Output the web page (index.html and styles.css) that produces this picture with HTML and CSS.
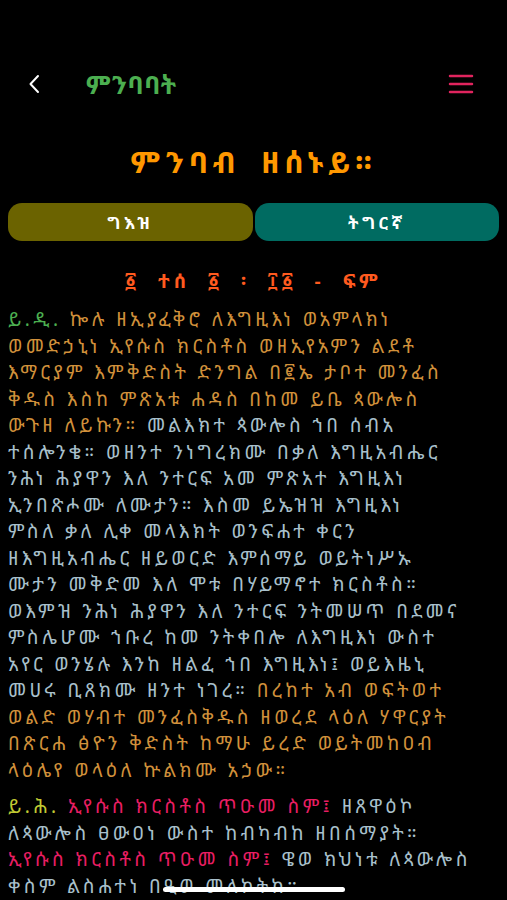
FILE: index.html
```html
<!DOCTYPE html>
<html lang="gez">
<head>
<meta charset="utf-8">
<title>ምንባባት</title>
<link rel="stylesheet" href="styles.css">
</head>
<body>
<div class="screen">
  <header class="topbar">
    <div class="left">
      <svg class="back" width="16" height="22" viewBox="0 0 16 22"><path d="M12 3 L4.5 11 L12 19" fill="none" stroke="#ffffff" stroke-width="2" stroke-linecap="round" stroke-linejoin="round"/></svg>
      <span class="apptitle">ምንባባት</span>
    </div>
    <svg class="menu" width="26" height="20" viewBox="0 0 26 20"><g stroke="#e0245e" stroke-width="2.5" stroke-linecap="round"><line x1="2" y1="2" x2="24" y2="2"/><line x1="2" y1="10" x2="24" y2="10"/><line x1="2" y1="18" x2="24" y2="18"/></g></svg>
  </header>

  <h1 class="title">ምንባብ ዘሰኑይ።</h1>

  <div class="tabs">
    <button class="tab geez">ግእዝ</button>
    <button class="tab tigrinya">ትግርኛ</button>
  </div>

  <h2 class="ref">፩ ተሰ ፩ ፡ ፲፩ - ፍም</h2>

  <div class="reading">
    <p class="para"><span class="green">ይ.ዲ.</span> <span class="gold">ኰሉ ዘኢያፈቅሮ ለእግዚእነ ወአምላክነ<br>ወመድኃኒነ ኢየሱስ ክርስቶስ ወዘኢየአምን ልደቶ<br>እማርያም እምቅድስት ድንግል በ፪ኤ ታቦተ መንፈስ<br>ቅዱስ እስከ ምጽአቱ ሐዳስ በከመ ይቤ ጳውሎስ<br>ውጉዘ ለይኩን።</span> <span class="grey">መልእክተ ጳውሎስ ኀበ ሰብአ<br>ተሰሎንቄ። ወዘንተ ንነግረክሙ በቃለ እግዚአብሔር<br>ንሕነ ሕያዋን እለ ንተርፍ አመ ምጽአተ እግዚእነ<br>ኢንበጽሖሙ ለሙታን። እስመ ይኤዝዝ እግዚእነ<br>ምስለ ቃለ ሊቀ መላእክት ወንፍሐተ ቀርን<br>ዘእግዚአብሔር ዘይወርድ እምሰማይ ወይትነሥኡ<br>ሙታን መቅድመ እለ ሞቱ በሃይማኖተ ክርስቶስ።<br>ወእምዝ ንሕነ ሕያዋን እለ ንተርፍ ንትመሠጥ በደመና<br>ምስሌሆሙ ኀቡረ ከመ ንትቀበሎ ለእግዚእነ ውስተ<br>አየር ወንሄሉ እንከ ዘልፈ ኀበ እግዚእነ፤ ወይእዜኒ<br>መሀሩ ቢጸክሙ ዘንተ ነገረ።</span> <span class="gold">በረከተ አብ ወፍትወተ<br>ወልድ ወሃብተ መንፈስቅዱስ ዘወረደ ላዕለ ሃዋርያት<br>በጽርሐ ፅዮን ቅድስት ከማሁ ይረድ ወይትመከዐብ<br>ላዕሌየ ወላዕለ ኵልክሙ አኃው።</span></p>

    <p class="para"><span class="lime">ይ.ሕ.</span> <span class="pink">ኢየሱስ ክርስቶስ ጥዑመ ስም፤</span> <span class="grey">ዘጸዋዕኮ<br>ለጳውሎስ ፀውዐነ ውስተ ከብካብከ ዘበሰማያት።</span><br><span class="pink">ኢየሱስ ክርስቶስ ጥዑመ ስም፤</span> <span class="grey">ዌወ ክህነቱ ለጳውሎስ<br>ቀስም ልስሐተነ በዒወ መለኮትከ።</span><br><span class="pink">ኢየሱስ ክርስቶስ ጥዑመ ስም፤</span> <span class="grey">ብርሃነ ትምህርት</span></p>
  </div>

  <div class="homebar"></div>
</div>
</body>
</html>
```

FILE: styles.css
```css
html, body {
  margin: 0;
  padding: 0;
  background: #000000;
}
body {
  font-family: "Noto Sans Ethiopic", "Abyssinica SIL", "DejaVu Sans", "Noto Sans", sans-serif;
  color: #ffffff;
  width: 507px;
  height: 900px;
  overflow: hidden;
}
.screen {
  position: relative;
  height: 900px;
  overflow: hidden;
  padding-top: 60px;
  box-sizing: border-box;
}
.topbar {
  height: 48px;
  display: flex;
  align-items: center;
  justify-content: space-between;
  padding: 0 33px 0 26px;
}
.left {
  display: flex;
  align-items: center;
  gap: 44px;
}
.apptitle {
  color: #4caf50;
  font-size: 25px;
  font-weight: bold;
  letter-spacing: 0.5px;
}
.title {
  margin: 36px 0 0;
  text-align: center;
  color: #ff9800;
  font-size: 30px;
  font-weight: bold;
  line-height: 36px;
  letter-spacing: 4.8px;
  word-spacing: 8px;
}
.tabs {
  display: flex;
  gap: 2px;
  margin: 23px 8px 0;
}
.tab {
  flex: 1;
  height: 38px;
  border: 0;
  border-radius: 14px;
  color: #ffffff;
  font-family: inherit;
  font-size: 17px;
  font-weight: bold;
  letter-spacing: 3.5px;
}
.geez { background: #6b6300; }
.tigrinya { background: #006b61; }
.ref {
  margin: 25px 0 0;
  text-align: center;
  color: #ff5a1f;
  font-size: 19px;
  font-weight: bold;
  line-height: 30px;
  letter-spacing: 4px;
  word-spacing: 9px;
}
.reading {
  padding: 0 8px;
  margin-top: 10px;
}
.para {
  margin: 0 0 10px;
  font-size: 19px;
  line-height: 26.5px;
  letter-spacing: 3.4px;
  white-space: nowrap;
}
.green { color: #4caf50; }
.lime { color: #c0ca33; }
.gold { color: #d1913b; }
.grey { color: #a9c0cc; }
.pink { color: #e91e63; }
.homebar {
  position: absolute;
  left: 163px;
  top: 887px;
  width: 182px;
  height: 5px;
  border-radius: 3px;
  background: #ffffff;
}
```
